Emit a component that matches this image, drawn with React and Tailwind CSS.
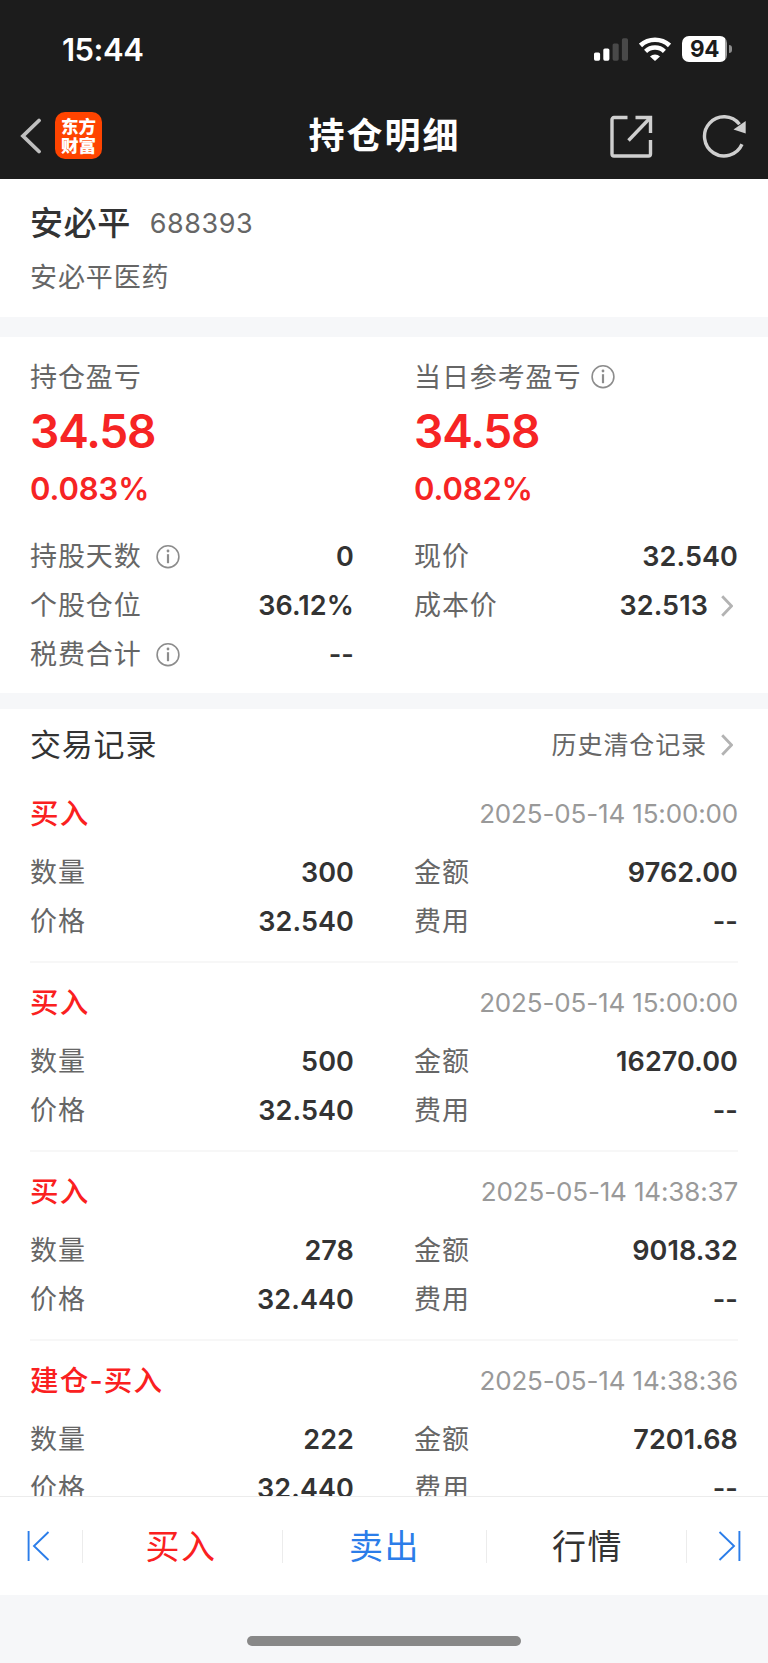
import React from "react";

const records = [
  { id: 1, type: "买入", time: "2025-05-14 15:00:00", amount: "300", total: "9762.00", price: "32.540", fee: "--" },
  { id: 2, type: "买入", time: "2025-05-14 15:00:00", amount: "500", total: "16270.00", price: "32.540", fee: "--" },
  { id: 3, type: "买入", time: "2025-05-14 14:38:37", amount: "278", total: "9018.32", price: "32.440", fee: "--" },
  { id: 4, type: "建仓-买入", time: "2025-05-14 14:38:36", amount: "222", total: "7201.68", price: "32.440", fee: "--" },
];

const InfoIcon = () => (
  <svg className="w-6 h-6 shrink-0" viewBox="0 0 24 24" fill="none">
    <circle cx="12" cy="11.7" r="10.9" stroke="#8c8c8c" strokeWidth="1.6" />
    <circle cx="12" cy="6" r="1.4" fill="#8c8c8c" />
    <path d="M12 9.2v9" stroke="#8c8c8c" strokeWidth="2.2" />
  </svg>
);

const ChevronIcon = () => (
  <svg className="w-3 h-[22px] shrink-0" viewBox="0 0 12 22" fill="none">
    <path d="M1.2 1.3L10.5 11l-9.3 9.7" stroke="#b3b3b3" strokeWidth="2.8" />
  </svg>
);

const StatusBar = () => (
  <div className="h-[93px] pt-[5px] pl-[62px] pr-9 flex items-center justify-between text-white">
    <span className="text-[31px] font-semibold tracking-[-0.5px]">15:44</span>
    <div className="flex items-center">
      <svg className="w-[34px] h-[23px]" viewBox="0 0 34 23">
        <rect x="0" y="14.4" width="6.1" height="8.3" rx="1.6" fill="#fff" />
        <rect x="9.3" y="10.4" width="6.1" height="12.3" rx="1.6" fill="#fff" />
        <rect x="18.6" y="5.4" width="6.1" height="17.3" rx="1.6" fill="#494949" />
        <rect x="27.9" y="0.3" width="6.1" height="22.4" rx="1.6" fill="#494949" />
      </svg>
      <svg className="w-8 h-6 ml-[11px] mb-px" viewBox="0 0 32 24" fill="none">
        <path d="M1.5 8.4a21.500 21.500 0 0 1 29 0" stroke="#fff" strokeWidth="4.7" />
        <path d="M6.6 14.300a13.500 13.500 0 0 1 18.800 0" stroke="#fff" strokeWidth="4.4" />
        <path d="M11 19.400a7.400 7.400 0 0 1 10 0L16 24z" fill="#fff" />
      </svg>
      <div className="ml-[11px] w-[45px] h-[26px] rounded-[7px] bg-linear-to-r from-white from-95% to-[#a0a0a0] to-95% flex items-center justify-center">
        <span className="text-[#1c1c1c] text-[22.5px] leading-none font-bold tracking-[-0.3px]">94</span>
      </div>
      <div className="ml-[2px] w-[3px] h-2 rounded-r-full bg-[#8d8d8d]" />
    </div>
  </div>
);

const NavBar = () => (
  <div className="h-[86px] pl-5 pr-[21px] grid grid-cols-[1fr_auto_1fr] items-center">
    <div className="flex items-center">
      <svg className="w-[22px] h-9" viewBox="0 0 22 36" fill="none">
        <path d="M19 2.5L3 18l16 15.500" stroke="#bfbfbf" strokeWidth="3.8" strokeLinecap="round" />
      </svg>
      <div className="mb-px ml-[13px] w-[47px] h-[47px] rounded-[10px] bg-[#ff4400] text-white text-[17.5px] leading-[19px] font-black flex flex-col items-center justify-center">
        <span>东方</span>
        <span>财富</span>
      </div>
    </div>
    <h1 className="pl-[2px] text-white text-[36px] leading-[44px] font-semibold tracking-[2px]">持仓明细</h1>
    <div className="flex items-center justify-end gap-[49px]">
      <svg className="w-[43px] h-[43px]" viewBox="0 0 43 43" fill="none" stroke="#cfcfcf" strokeWidth="3.400">
        <path d="M17.500 2.500H4a2 2 0 0 0-2 2v34.500a2 2 0 0 0 2 2h34.500a2 2 0 0 0 2-2V25" />
        <path d="M25.500 2.500h15V18" />
        <path d="M40 3L18.500 25.500" />
      </svg>
      <svg className="w-[45px] h-[43px]" viewBox="0 0 45 43" fill="none">
        <path d="M40 29.300A19.600 19.600 0 1 1 37.500 9.200" stroke="#cfcfcf" strokeWidth="3.400" />
        <path d="M43.700 6v12.500L31.500 14.500z" fill="#cfcfcf" />
      </svg>
    </div>
  </div>
);

const Profit = ({ label, value, percent, info }) => (
  <div>
    <div className="h-[40px] flex items-center gap-[10px] text-[#666]">
      <span>{label}</span>
      {info && <InfoIcon />}
    </div>
    <div className="h-[68px] flex items-center text-[46px] font-semibold text-[#f62424] tracking-[-1.1px]">{value}</div>
    <div className="h-[46px] flex items-center text-[31px] font-semibold text-[#f62424] tracking-[-0.1px]">{percent}</div>
  </div>
);

const Field = ({ label, value, info, arrow }) => (
  <div className="h-[49px] flex items-center">
    <span className="text-[#666]">{label}</span>
    {info && (
      <span className="ml-[14px]">
        <InfoIcon />
      </span>
    )}
    <span className="ml-auto text-[27px] font-semibold text-[#333] tracking-[0.1px]">{value}</span>
    {arrow && (
      <span className="ml-[13px] mr-[5px]">
        <ChevronIcon />
      </span>
    )}
  </div>
);

const TradeRecord = ({ record }) => (
  <div className="h-[189px] shrink-0 pt-[15px] border-b-2 border-[#f7f7f7]">
    <div className="h-[50px] flex items-center justify-between">
      <span className="text-[28.5px] font-medium text-[#fa2020] tracking-[1.2px]">{record.type}</span>
      <span className="text-[26px] text-[#999] tracking-[-0.15px]">{record.time}</span>
    </div>
    <div className="mt-[9px] grid grid-cols-2 gap-x-[60px]">
      <Field label="数量" value={record.amount} />
      <Field label="金额" value={record.total} />
      <Field label="价格" value={record.price} />
      <Field label="费用" value={record.fee} />
    </div>
  </div>
);

const BottomBar = () => (
  <div className="h-[99px] shrink-0 bg-white border-t border-[#ececec] flex items-center text-[34px] tracking-[1.5px]">
    <button className="w-[82px] h-[33px] pl-[27px] flex items-center">
      <svg className="w-[23px] h-[30px]" viewBox="0 0 23 30" fill="none" stroke="#2b7de9" strokeWidth="1.9">
        <path d="M1.600 0v30M21.500 1L7 15l14.500 14" />
      </svg>
    </button>
    <button className="w-[200px] h-[33px] pr-[3px] border-l border-[#ececec] text-[#fa2020] leading-[33px]">买入</button>
    <button className="w-[204px] h-[33px] border-l border-[#ececec] text-[#2b7de9] leading-[33px]">卖出</button>
    <button className="w-[200px] h-[33px] pl-[2px] border-l border-[#ececec] text-[#333] leading-[33px]">行情</button>
    <button className="flex-1 h-[33px] pl-[31px] border-l border-[#ececec] flex items-center">
      <svg className="w-[23px] h-[30px]" viewBox="0 0 23 30" fill="none" stroke="#2b7de9" strokeWidth="1.9">
        <path d="M21.400 0v30M1.500 1L16 15L1.500 29" />
      </svg>
    </button>
  </div>
);

const App = () => {
  return (
    <div className="w-[768px] h-[1663px] overflow-hidden flex flex-col bg-[#f6f7f9] font-['Inter','Noto_Sans_CJK_SC',sans-serif] text-[27px] leading-none tracking-[0.9px]">
      <header className="h-[179px] shrink-0 bg-[#1c1c1c] tracking-normal">
        <StatusBar />
        <NavBar />
      </header>

      {/* Stock name */}
      <section className="h-[138px] shrink-0 bg-white px-[30px] pt-[18px]">
        <div className="h-[52px] flex items-center">
          <span className="text-[33px] font-medium text-[#333] tracking-[0.6px]">安必平</span>
          <span className="ml-[19px] text-[27px] text-[#666] tracking-[0.5px]">688393</span>
        </div>
        <div className="h-[56px] flex items-center text-[#666]">安必平医药</div>
      </section>

      {/* Profit and position */}
      <section className="mt-5 h-[356px] shrink-0 bg-white px-[30px] pt-5">
        <div className="grid grid-cols-2 gap-x-[60px]">
          <Profit label="持仓盈亏" value="34.58" percent="0.083%" />
          <Profit label="当日参考盈亏" value="34.58" percent="0.082%" info />
        </div>
        <div className="mt-[21px] grid grid-cols-2 gap-x-[60px]">
          <Field label="持股天数" value="0" info />
          <Field label="现价" value="32.540" />
          <Field label="个股仓位" value="36.12%" />
          <Field label="成本价" value="32.513" arrow />
          <Field label="税费合计" value="--" info />
        </div>
      </section>

      {/* Trade records */}
      <section className="mt-4 flex-1 min-h-0 overflow-hidden bg-white px-[30px] flex flex-col">
        <div className="h-[65px] pt-[6px] shrink-0 flex items-center justify-between">
          <span className="text-[31px] text-[#333] tracking-[0.8px]">交易记录</span>
          <span className="pt-px flex items-center gap-[14px] pr-[5px] text-[25px] text-[#666]">
            历史清仓记录
            <ChevronIcon />
          </span>
        </div>
        {records.map((record) => (
          <TradeRecord key={record.id} record={record} />
        ))}
      </section>

      <BottomBar />
      <div className="h-[68px] shrink-0 pt-[41px] flex justify-center">
        <div className="w-[274px] h-[10px] rounded-full bg-[#888]" />
      </div>
    </div>
  );
};

export default App;
